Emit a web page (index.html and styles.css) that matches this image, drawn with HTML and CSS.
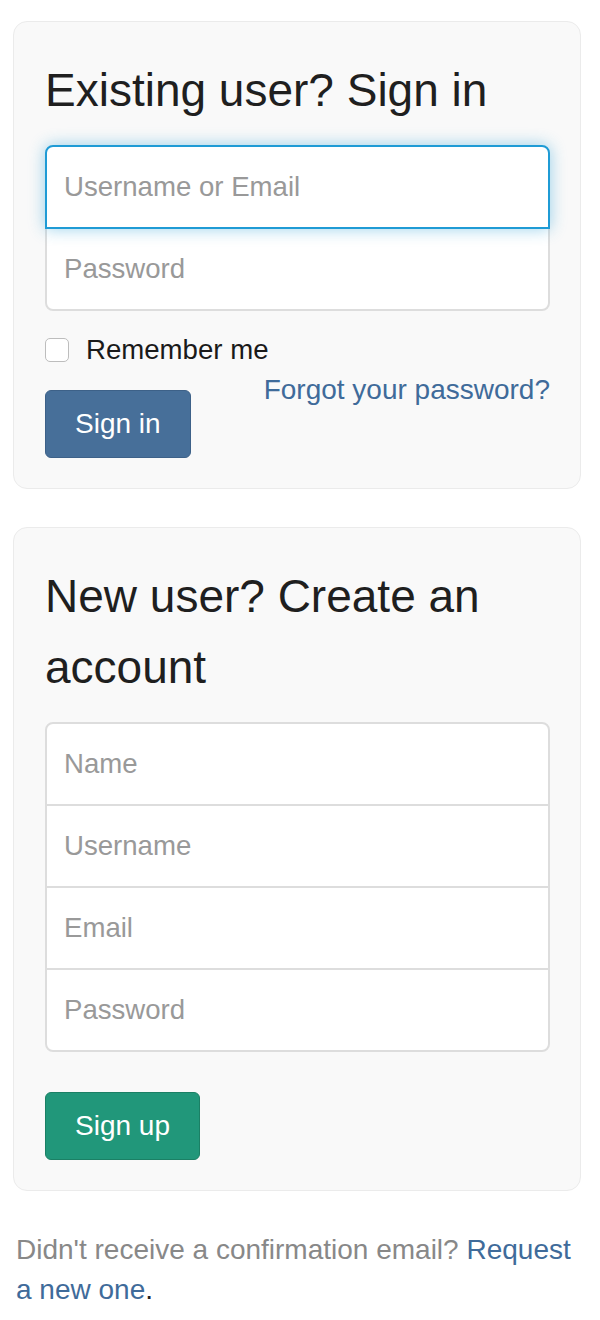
FILE: index.html
```html
<!DOCTYPE html>
<html lang="en">
<head>
<meta charset="utf-8">
<title>Sign in</title>
<link rel="stylesheet" href="styles.css">
</head>
<body>
<div class="page">
  <section class="card">
    <h2 class="card-title">Existing user? Sign in</h2>
    <div class="input-group">
      <input class="field focused" type="text" placeholder="Username or Email">
      <input class="field" type="password" placeholder="Password">
    </div>
    <label class="remember"><span class="checkbox"></span><span>Remember me</span></label>
    <div class="actions">
      <button class="btn btn-primary" type="button">Sign in</button>
      <a class="link forgot" href="#">Forgot your password?</a>
    </div>
  </section>

  <section class="card card-second">
    <h2 class="card-title">New user? Create an account</h2>
    <div class="input-group">
      <input class="field" type="text" placeholder="Name">
      <input class="field" type="text" placeholder="Username">
      <input class="field" type="text" placeholder="Email">
      <input class="field" type="password" placeholder="Password">
    </div>
    <div class="signup-row">
      <button class="btn btn-success" type="button">Sign up</button>
    </div>
  </section>

  <p class="footer-note"><span class="muted">Didn't receive a confirmation email?</span> <a class="link" href="#">Request a new one</a><span class="dot">.</span></p>
</div>
</body>
</html>
```

FILE: styles.css
```css
html, body {
  margin: 0;
  padding: 0;
  background: #ffffff;
}

body {
  font-family: "Liberation Sans", Arial, Helvetica, sans-serif;
  font-size: 28px;
  line-height: 40px;
  color: #222222;
}

.page {
  padding: 21px 19px 0 13px;
}

.card {
  background: #f9f9f9;
  border: 1px solid #ebebeb;
  border-radius: 14px;
  padding: 33px 30px 30px 31px;
}

.card-second {
  margin-top: 38px;
}

.card-title {
  margin: 0 0 19px 0;
  font-size: 46px;
  line-height: 71px;
  font-weight: normal;
  color: #1f1f1f;
}

.input-group {
  display: flex;
  flex-direction: column;
}

.field {
  display: block;
  box-sizing: border-box;
  width: 100%;
  height: 84px;
  margin: 0;
  padding: 0 17px;
  border: 2px solid #dddddd;
  background: #ffffff;
  font-family: "Liberation Sans", Arial, Helvetica, sans-serif;
  font-size: 27.6px;
  color: #333333;
  border-radius: 0;
  outline: none;
}

.field + .field {
  margin-top: -2px;
}

.field:first-child {
  border-radius: 8px 8px 0 0;
}

.field:last-child {
  border-radius: 0 0 8px 8px;
}

.field::placeholder {
  color: #999999;
  opacity: 1;
}

.field.focused {
  position: relative;
  z-index: 1;
  border-color: #1f9bd5;
  box-shadow: 0 0 16px rgba(31, 155, 213, 0.45);
}

.remember {
  display: flex;
  align-items: center;
  gap: 17px;
  margin-top: 19px;
  height: 40px;
  font-size: 27.6px;
  color: #1a1a1a;
}

.checkbox {
  box-sizing: border-box;
  width: 24px;
  height: 24px;
  border: 1.5px solid #bdbdbd;
  border-radius: 5px;
  background: #ffffff;
}

.actions {
  display: flex;
  justify-content: space-between;
  align-items: flex-start;
}

.btn {
  box-sizing: border-box;
  height: 68px;
  padding: 0 29px;
  border-radius: 6px;
  font-family: "Liberation Sans", Arial, Helvetica, sans-serif;
  font-size: 28px;
  color: #ffffff;
  cursor: pointer;
}

.actions .btn {
  margin-top: 20px;
}

.btn-primary {
  background: #476f99;
  border: 1.5px solid #3d6188;
}

.btn-success {
  background: #21977a;
  border: 1.5px solid #1b8065;
}

.signup-row {
  margin-top: 40px;
  display: flex;
}

.link {
  color: #3f6b9a;
  text-decoration: none;
}

.forgot {
  font-size: 28px;
  line-height: 40px;
}

.footer-note {
  margin: 39px 3px 0 3px;
  color: #222222;
  font-size: 28px;
  line-height: 40px;
}

.footer-note .muted {
  color: #888888;
}

.footer-note .link {
  color: #3f6b9a;
}
```
